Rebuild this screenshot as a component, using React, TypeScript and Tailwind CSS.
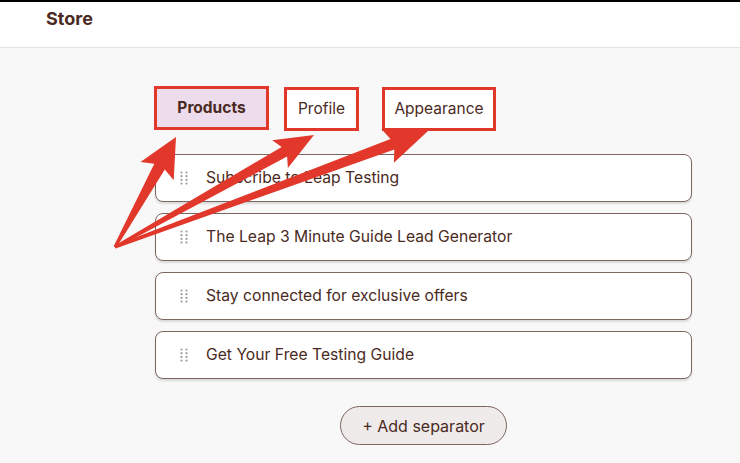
import React from "react";

const items = [
  "Subscribe to Leap Testing",
  "The Leap 3 Minute Guide Lead Generator",
  "Stay connected for exclusive offers",
  "Get Your Free Testing Guide",
];

type Pt = [number, number];

// tapered annotation arrow: thin at origin, wide head at tip
function arrowPoints(from: Pt, to: Pt, headLen: number, headW: number, shaftW: number) {
  const dx = to[0] - from[0];
  const dy = to[1] - from[1];
  const len = Math.hypot(dx, dy);
  const ux = dx / len;
  const uy = dy / len;
  const nx = -uy;
  const ny = ux;
  const bx = to[0] - ux * headLen;
  const by = to[1] - uy * headLen;
  const p = (x: number, y: number) => `${x.toFixed(1)},${y.toFixed(1)}`;
  return [
    p(from[0] + nx * 1.5, from[1] + ny * 1.5),
    p(bx + nx * shaftW / 2, by + ny * shaftW / 2),
    p(bx + nx * headW / 2 - ux * 5, by + ny * headW / 2 - uy * 5),
    p(to[0], to[1]),
    p(bx - nx * headW / 2 - ux * 5, by - ny * headW / 2 - uy * 5),
    p(bx - nx * shaftW / 2, by - ny * shaftW / 2),
    p(from[0] - nx * 1.5, from[1] - ny * 1.5),
  ].join(" ");
}

function DragHandle() {
  return (
    <svg width="8" height="14" viewBox="0 0 8 14" className="shrink-0">
      {[0, 1, 2, 3].map((r) =>
        [0, 1].map((c) => (
          <circle key={`${r}-${c}`} cx={1.5 + c * 5} cy={1.5 + r * 3.7} r="1.1" fill="#a39a98" />
        ))
      )}
    </svg>
  );
}

export default function App() {
  return (
    <div className="relative w-[740px] h-[463px] overflow-hidden bg-[#f8f8f8] font-['Inter',sans-serif] text-[#4a2a22]">
      <header className="border-t-2 border-black bg-white h-[48px] border-b border-b-[#e4e4e4] flex items-start pl-[46px] pt-[3px]">
        <h1 className="text-[18px] font-bold">Store</h1>
      </header>

      <main className="pl-[154px] pt-[38px] w-[692px]">
        <div className="flex items-start">
          <div className="w-[115px] h-[44px] border-[3px] border-[#e2382b] bg-[#ecdcec] flex items-center justify-center text-[15.5px] font-bold">
            Products
          </div>
          <div className="mt-px ml-[15px] w-[75px] h-[44px] border-[3px] border-[#e2382b] bg-white flex items-center justify-center text-[15.5px]">
            Profile
          </div>
          <div className="mt-px ml-[23px] w-[114px] h-[44px] border-[3px] border-[#e2382b] bg-white flex items-center justify-center text-[15.5px]">
            Appearance
          </div>
        </div>

        <div className="mt-[23px] ml-px flex flex-col gap-[11px]">
          {items.map((t) => (
            <div
              key={t}
              className="h-[48px] rounded-lg border-[1.5px] border-[#7d6560] bg-white shadow-[0_2px_2px_rgba(0,0,0,0.12)] flex items-center pl-[24px] gap-[18px] text-[15.7px]"
            >
              <DragHandle />
              <span>{t}</span>
            </div>
          ))}
        </div>

        <div className="flex justify-center mt-[27px] pl-px">
          <button className="h-[39px] w-[167px] rounded-full border-[1.5px] border-[#7d6560] bg-[#efebeb] text-[16px] text-[#4a2a22]">
            + Add separator
          </button>
        </div>
      </main>

      <svg className="absolute inset-0 pointer-events-none" width="740" height="463">
        <polygon points={arrowPoints([115, 247], [176, 137], 34, 38, 12)} fill="#e2382b" />
        <polygon points={arrowPoints([115, 247], [314, 135], 34, 32, 11)} fill="#e2382b" />
        <polygon points={arrowPoints([115, 247], [428, 131], 38, 36, 11)} fill="#e2382b" />
      </svg>
    </div>
  );
}
